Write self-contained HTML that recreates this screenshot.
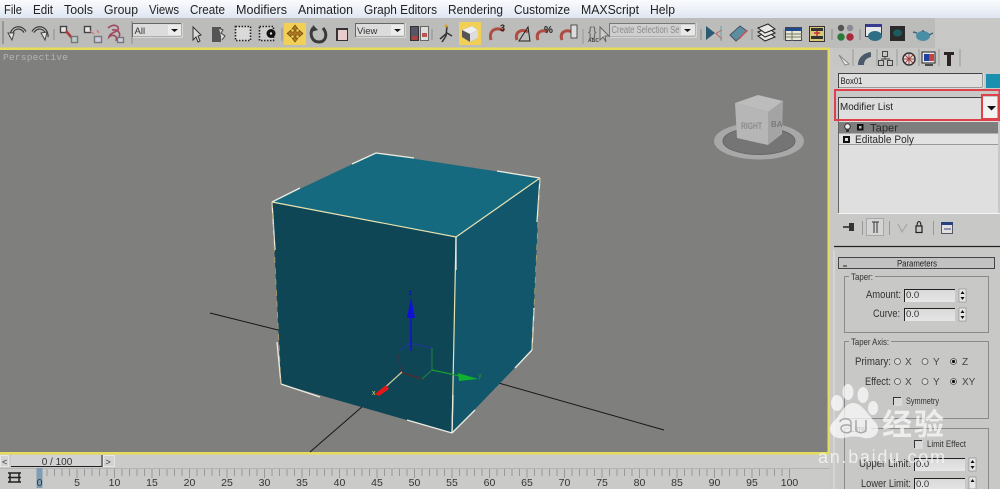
<!DOCTYPE html>
<html><head><meta charset="utf-8"><style>
html,body{margin:0;padding:0;background:#c8c8c6;width:1000px;height:489px;overflow:hidden}
svg{display:block;font-family:"Liberation Sans",sans-serif;filter:blur(.35px)}
</style></head><body>
<svg width="1000" height="489" viewBox="0 0 1000 489" xmlns="http://www.w3.org/2000/svg">
<defs>
<linearGradient id="mb" x1="0" y1="0" x2="0" y2="1"><stop offset="0" stop-color="#fafbfd"/><stop offset="1" stop-color="#dfe6f2"/></linearGradient>
<linearGradient id="fld" x1="0" y1="0" x2="0" y2="1"><stop offset="0" stop-color="#d8d8d8"/><stop offset="1" stop-color="#e6e6e6"/></linearGradient>
</defs>
<rect width="1000" height="489" fill="#c8c8c6"/>
<!-- menu -->
<rect width="1000" height="18" fill="url(#mb)"/>
<g font-size="13" fill="#222">
<text x="4" y="14" textLength="18" lengthAdjust="spacingAndGlyphs">File</text><text x="33" y="14" textLength="20" lengthAdjust="spacingAndGlyphs">Edit</text><text x="64" y="14" textLength="29" lengthAdjust="spacingAndGlyphs">Tools</text><text x="104" y="14" textLength="34" lengthAdjust="spacingAndGlyphs">Group</text><text x="149" y="14" textLength="30" lengthAdjust="spacingAndGlyphs">Views</text><text x="190" y="14" textLength="35" lengthAdjust="spacingAndGlyphs">Create</text><text x="236" y="14" textLength="51" lengthAdjust="spacingAndGlyphs">Modifiers</text><text x="298" y="14" textLength="55" lengthAdjust="spacingAndGlyphs">Animation</text><text x="364" y="14" textLength="73" lengthAdjust="spacingAndGlyphs">Graph Editors</text><text x="448" y="14" textLength="55" lengthAdjust="spacingAndGlyphs">Rendering</text><text x="514" y="14" textLength="56" lengthAdjust="spacingAndGlyphs">Customize</text><text x="581" y="14" textLength="58" lengthAdjust="spacingAndGlyphs">MAXScript</text><text x="650" y="14" textLength="25" lengthAdjust="spacingAndGlyphs">Help</text>
</g>
<!-- toolbar -->
<rect x="0" y="18" width="935" height="30" fill="#bcbcba"/>
<rect x="935" y="18" width="65" height="31" fill="#c8c8c6"/>
<path d="M3 21V44" stroke="#8a8a8a" stroke-width="1.500"/>
<!-- undo redo -->
<g fill="none" stroke="#3c3c3c" stroke-width="3.500"><path d="M11 37C11 27 21 25 25 32"/><path d="M33 32C37 25 47 27 47 37"/></g>
<g fill="none" stroke="#c8c8c8" stroke-width="1"><path d="M11 37C11 27 21 25 25 32"/><path d="M33 32C37 25 47 27 47 37"/></g>
<g fill="#e8e8e8" stroke="#444" stroke-width="1"><path d="M8 33L14 33L12 40Z"/><path d="M41 33L47 32L45 40Z"/></g>
<path d="M54 29V40M132 21V44M282 28V41M432 29V40" stroke="#8c8c8c"/>
<!-- link icons -->
<g fill="none" stroke-width="1.400">
<rect x="60.500" y="26.500" width="6" height="6" fill="#e8e8e8" stroke="#444"/><path d="M66 31L72 38" stroke="#b03a3a" stroke-width="2.500"/><rect x="71.500" y="36.500" width="6" height="6" fill="#bcc" stroke="#777"/>
<rect x="84.500" y="26.500" width="6" height="6" fill="#e8e8e8" stroke="#444"/><path d="M90 31L94 34M97 30L99 33" stroke="#c77"/><rect x="94.500" y="36.500" width="7" height="6" fill="#ccd" stroke="#777"/>
<path d="M108 28C114 23 120 26 118 30C114 33 110 33 109 37C112 34 118 35 116 41M112 30C118 29 121 33 119 37" stroke="#a04860" stroke-width="1.600"/><rect x="117.500" y="37.500" width="6" height="5" fill="#ccd" stroke="#777"/>
</g>
<!-- All dropdown -->
<rect x="132.500" y="23.500" width="49" height="13" fill="#dcdcdc" stroke="#666"/><path d="M133 37H182V23" fill="none" stroke="#f2f2f2"/>
<rect x="168" y="25" width="13" height="10" fill="#ececec"/><path d="M171 29H178L174.500 32Z" fill="#111"/>
<text x="134.500" y="34" font-size="9.500" fill="#333">All</text>
<!-- select icons -->
<path d="M193 27L193 40L196 37L198 42L200 41L198 36L201 35Z" fill="#dcdcdc" stroke="#333"/>
<rect x="212" y="27" width="9" height="15" fill="#555"/><path d="M219 28L223 30L221 33L225 36L222 40" fill="#ddd" stroke="#444"/>
<rect x="235.500" y="26.500" width="15" height="14" fill="#dadada" stroke="#222" stroke-width="1.600" stroke-dasharray="1.500 1.500"/>
<rect x="259.500" y="26.500" width="14" height="14" fill="#cfcfcf" stroke="#222" stroke-width="1.600" stroke-dasharray="1.500 1.500"/><circle cx="271" cy="33.500" r="4.500" fill="#111"/><circle cx="271" cy="33.500" r="1.200" fill="#ddd"/>
<!-- move active -->
<rect x="284" y="23" width="22" height="22" fill="#f2cf55"/>
<path d="M295 25L298 29H296V32H299V30L303 33.500L299 37V35H296V38H298L295 42L292 38H294V35H291V37L287 33.500L291 30V32H294V29H292Z" fill="#b07820" stroke="#5a4010" stroke-width=".6"/>
<!-- rotate scale -->
<path d="M313 28C309 34 312 42 319 42C326 42 328 34 323 28" fill="none" stroke="#3a3a3a" stroke-width="3"/><path d="M313 25L318 30L311 32Z" fill="#3a3a3a"/>
<rect x="336" y="28" width="12" height="13" fill="#333"/><rect x="338" y="30" width="9" height="10" fill="#e9cccc"/>
<!-- View dropdown -->
<rect x="355.500" y="23.500" width="49" height="13" fill="#dcdcdc" stroke="#666"/><path d="M356 37H405V23" fill="none" stroke="#f2f2f2"/>
<rect x="391" y="25" width="13" height="10" fill="#ececec"/><path d="M394 29H401L397.500 32Z" fill="#111"/>
<text x="357" y="34" font-size="9.500" fill="#333">View</text>
<rect x="410.500" y="26.500" width="8" height="14" fill="#556" stroke="#333"/><rect x="412" y="36" width="5" height="4" fill="#a44"/><rect x="420.500" y="26.500" width="8" height="14" fill="#ddd" stroke="#666"/><rect x="422" y="33" width="5" height="4" fill="#b55"/>
<path d="M447 26L446 36M440 39L447 33L452 36M446 36L442 42" stroke="#333" stroke-width="1.500" fill="none"/><circle cx="446" cy="26" r="1.500" fill="#dca020"/>
<!-- snap active -->
<rect x="459" y="22" width="22" height="23" fill="#f2cf55"/>
<path d="M462 30L472 26L478 30V38L470 42L462 37Z" fill="#555"/><path d="M462 30L472 26L478 30L470 34Z" fill="#eee"/><path d="M470 34V42L478 38V30Z" fill="#ddd"/>
<!-- magnets -->
<g fill="none" stroke="#b04d42" stroke-width="3">
<path d="M491 40C488 30 497 26 504 31"/><path d="M517 40C514 32 522 28 528 32"/><path d="M538 40C535 32 542 29 548 32"/><path d="M562 40C559 32 566 29 572 32"/></g>
<text x="500" y="31" font-size="9" font-weight="bold" fill="#222">3</text>
<path d="M519 41L528 27L530 41Z" fill="none" stroke="#222"/>
<text x="544" y="33" font-size="10" font-weight="bold" fill="#222">%</text>
<rect x="571" y="25" width="6" height="13" fill="#ddd" stroke="#333" stroke-width=".8"/>
<path d="M583 29V44" stroke="#999"/>
<text x="588" y="36" font-size="13" fill="#666">{}</text><path d="M600 27V40L603 37L606 42L605 36L609 36Z" fill="#ccc" stroke="#666"/>
<text x="588" y="42" font-size="5" font-weight="bold" fill="#444">ABC</text>
<!-- selection set -->
<rect x="609.500" y="23.500" width="86" height="13" fill="#cfcfcf" stroke="#777"/><path d="M610 37H696V23" fill="none" stroke="#ededed"/>
<rect x="681" y="25" width="14" height="10" fill="#e8e8e8"/><path d="M684 29H691L687.500 32Z" fill="#111"/>
<text x="611.500" y="33" font-size="10" fill="#8a8a8a" textLength="68" lengthAdjust="spacingAndGlyphs">Create Selection Se</text>
<path d="M701 29V40M752 29V40M784 29V40M832 29V40M860 29V40" stroke="#8c8c8c"/>
<path d="M706 26L715 33L706 40Z" fill="#2c5a72"/><path d="M721 26V41" stroke="#8aa" stroke-width="1.500"/><path d="M722 30L716 33.500L722 39" fill="none" stroke="#b77" stroke-width="1.300"/>
<path d="M730 35L740 26L747 31L736 41Z" fill="#5b8ea0" stroke="#456"/><path d="M739 39L747 30" stroke="#c55" stroke-width="1.500"/>
<g fill="#e8e8e8" stroke="#222"><path d="M758 36L768 32L775 37L765 41Z"/><path d="M758 32L768 28L775 33L765 37Z"/><path d="M758 28L768 24L775 29L765 33Z"/></g>
<rect x="785.500" y="27.500" width="16" height="13" fill="#e8e8d8" stroke="#445"/><rect x="786" y="28" width="16" height="3" fill="#1f4a90"/><path d="M786 34H802M786 37H802M792 31V41" stroke="#776"/>
<rect x="809.500" y="26.500" width="15" height="15" fill="#d9c87a" stroke="#333"/><rect x="811" y="28" width="12" height="3" fill="#333"/><rect x="811" y="36" width="12" height="3" fill="#333"/><path d="M817 31V36M814 33H820" stroke="#c33" stroke-width="1.500"/>
<g><circle cx="841" cy="28" r="3.200" fill="#555"/><circle cx="850" cy="28" r="3.200" fill="#8a8a95"/><circle cx="841" cy="37" r="3.700" fill="#2a7a3a"/><circle cx="850" cy="37" r="3.700" fill="#a82a3a"/></g>
<rect x="865.500" y="24.500" width="16" height="12" fill="#e8e8e8" stroke="#334"/><rect x="866" y="24" width="16" height="3" fill="#3a3a90"/><ellipse cx="875" cy="36" rx="7" ry="5" fill="#2e6f86"/>
<rect x="890" y="26" width="15" height="15" fill="#2a2a2a"/><ellipse cx="897.500" cy="33" rx="4.500" ry="3.500" fill="#1d5c5c"/>
<ellipse cx="923" cy="36" rx="7" ry="5" fill="#4a8ea6"/><path d="M917 33L913 32M929 35L933 33" stroke="#467" stroke-width="1.500"/><circle cx="923" cy="31" r="1" fill="#467"/>
<!-- viewport -->
<rect x="0" y="47.500" width="830" height="2.500" fill="#e6dc5c"/>
<rect x="0" y="50" width="828" height="402" fill="#7f7f7e"/>
<rect x="827.500" y="48" width="2.500" height="406" fill="#e6dc5c"/>
<rect x="0" y="452" width="830" height="2.500" fill="#e6dc5c"/>
<text x="3" y="60" font-size="9.500" fill="#b4b4b4" font-family="Liberation Mono,monospace" textLength="65">Perspective</text>
<!-- grid lines -->
<g stroke="#161616" stroke-width="1" fill="none"><path d="M210 313L282 331"/><path d="M495 382L664 430"/><path d="M310 452L363 406"/></g>
<!-- cube -->
<path d="M272 202L376 153L540 178L456 237Z" fill="#166a80"/>
<path d="M272 202L456 237L452 433L281 384Z" fill="#0e4656"/>
<path d="M456 237L540 178L532 350L452 433Z" fill="#11566a"/>
<g fill="none" stroke="#e8e2b0" stroke-width="1.200"><path d="M272 202L456 237L540 178"/><path d="M456 237L452 433"/></g>
<g fill="none" stroke="#ecebe0" stroke-width="1.300">
<path d="M272 202L275 250M272 202L300 188M376 153L352 164M376 153L414 158M540 178L497 171M540 178L537 222M456 237L456 270M281 384L277 342M281 384L320 397M452 433L407 420M452 433L475 410M452 433L453 395M532 350L534 308M532 350L515 368"/>
</g>
<path d="M272 202L281 384M540 178L532 350" stroke="#b8a870" stroke-width=".7" fill="none" stroke-dasharray="6 5"/>
<!-- gizmo -->
<g fill="none" stroke-width="1.200">
<path d="M400 355L399 355L400 372L422 379" stroke="#5a2a30"/>
<path d="M410 343L399 351" stroke="#1a3a90"/><path d="M410 343L432 348" stroke="#1a3a90"/>
<path d="M432 348V370L422 379" stroke="#1d7a44"/>
<path d="M411 351V305" stroke="#1414c8" stroke-width="1.600"/>
<path d="M432 370L460 376" stroke="#16a030" stroke-width="1.400"/>
<path d="M402 372L380 392" stroke="#d0d0a0"/>
</g>
<path d="M411 298L415 318H407Z" fill="#1010d8"/>
<text x="408.500" y="295" font-size="7" font-weight="bold" fill="#1010c0">z</text>
<path d="M458 373L478 379L459 381Z" fill="#10b030"/>
<text x="478" y="378" font-size="7" fill="#20a040">y</text>
<path d="M375 394L386 385L389 389L379 396Z" fill="#e01818"/>
<text x="372" y="395" font-size="7" fill="#e8d860">x</text>
<!-- viewcube -->
<ellipse cx="759" cy="141" rx="45" ry="18.500" fill="#a8a8a8"/>
<ellipse cx="759" cy="141" rx="36" ry="13.500" fill="#757575" stroke="#666"/>
<path d="M735 103L758 95L783 101L768 112Z" fill="#bcbcbc"/>
<path d="M735 103L768 112L768 145L737 138Z" fill="#b6b6b6"/>
<path d="M768 112L783 101L782 134L768 145Z" fill="#a4a4a4"/>
<text x="741" y="129" font-size="9" font-weight="bold" fill="#8b8b8b" textLength="21" lengthAdjust="spacingAndGlyphs">RIGHT</text>
<text x="771" y="127" font-size="8" font-weight="bold" fill="#7a7a7a">BA</text>
<!-- right panel -->
<rect x="830" y="49" width="170" height="440" fill="#c8c8c6"/>
<rect x="833" y="48" width="127" height="19" fill="#c6c6c4"/>
<path d="M853 49V66M877 49V66M897 49V66M919 49V66M939 49V66M960 49V66" stroke="#9a9a9a"/>
<path d="M839 55L849 64L845 65Z" fill="#eee" stroke="#888"/>
<path d="M858 65C858 58 863 53 871 52L871 57C866 58 864 61 864 65Z" fill="#4a5a6a"/>
<g fill="none" stroke="#444"><rect x="882.500" y="51.500" width="5" height="5"/><rect x="878.500" y="60.500" width="5" height="5"/><rect x="887.500" y="60.500" width="5" height="5"/><path d="M885 57V59H881M885 59H890"/></g>
<circle cx="909" cy="59" r="6" fill="#e6e0e0" stroke="#333" stroke-width="1.500"/><path d="M904 59H914M909 54V64M905 55L913 63M913 55L905 63" stroke="#a04040"/>
<rect x="922" y="52" width="13" height="11" fill="#e8e8ee" stroke="#222"/><rect x="924" y="54" width="5" height="7" fill="#2040a0"/><path d="M929 54H934V61H929Z" fill="#c84040"/><path d="M925 65H933" stroke="#222" stroke-width="1.500"/>
<path d="M944 52H954V55H951V66H947V55H944Z" fill="#2a2522"/>
<!-- name field -->
<rect x="838.500" y="73.500" width="144" height="14" fill="#dedede" stroke="#444"/><path d="M839 88H983V73" fill="none" stroke="#efefef"/>
<text x="840.500" y="84" font-size="9.500" fill="#222" textLength="22" lengthAdjust="spacingAndGlyphs">Box01</text>
<rect x="986" y="74" width="14" height="14" fill="#1a8fae"/>
<!-- modifier list -->
<rect x="838" y="97" width="144" height="22" fill="#dedede"/><path d="M838.500 119V97.500H982" fill="none" stroke="#444"/>
<text x="840" y="110" font-size="10.500" fill="#222" textLength="53" lengthAdjust="spacingAndGlyphs">Modifier List</text>
<rect x="983" y="97" width="15" height="21" fill="#f2f2f2"/><path d="M987 106H996L991.500 110.500Z" fill="#111"/>
<rect x="835" y="90" width="164.500" height="30" fill="none" stroke="#e0404a" stroke-width="2"/>
<rect x="982" y="95" width="16.500" height="24" fill="none" stroke="#e0404a" stroke-width="2"/>
<!-- stack -->
<rect x="838" y="121" width="160" height="92" fill="#dfdfdf"/>
<path d="M838.500 121V213" stroke="#666"/><path d="M838 213.500H1000" stroke="#f4f4f4"/>
<rect x="839" y="122" width="159" height="11.500" fill="#7e7e7e"/>
<rect x="839" y="134" width="159" height="10.500" fill="#e2e2e2"/>
<path d="M839 144.500H998" stroke="#999"/>
<circle cx="847.500" cy="126.500" r="2.800" fill="#eee" stroke="#333"/><rect x="846" y="129" width="3" height="3" fill="#333"/>
<rect x="857" y="124" width="6.500" height="6.500" fill="#111"/><rect x="859" y="126" width="2.500" height="2.500" fill="#bbb"/>
<text x="870" y="131.500" font-size="11" fill="#2a2a2a" textLength="28" lengthAdjust="spacingAndGlyphs">Taper</text>
<rect x="843" y="136" width="7" height="7" fill="#111"/><rect x="845" y="138" width="3" height="3" fill="#ddd"/>
<text x="855" y="143" font-size="11" fill="#2a2a2a" textLength="59" lengthAdjust="spacingAndGlyphs">Editable Poly</text>
<!-- stack buttons -->
<g fill="none">
<path d="M843 227H849" stroke="#222" stroke-width="1.500"/><rect x="849" y="223" width="5" height="8" fill="#333"/>
<path d="M862.500 221V235M889.500 221V235M933.500 221V235" stroke="#999"/>
<rect x="866.500" y="218.500" width="17" height="17" stroke="#a8a8a8" fill="#d4d4d4"/>
<path d="M874 222V233M877 222V233" stroke="#333"/><path d="M872 222H876M875 222H879" stroke="#333"/>
<path d="M898 224L902 232L907 224" stroke="#a0a0a0"/>
<rect x="916" y="226" width="6" height="6.500" stroke="#222" stroke-width="1.200"/><path d="M917 226C917 220 921 220 921 226" stroke="#222"/>
<rect x="941.500" y="222.500" width="11" height="11" stroke="#556" fill="#e0e0e0"/><rect x="941" y="222" width="12" height="3" fill="#2a3f80"/><path d="M944 229H951" stroke="#447"/>
</g>
<path d="M834 246.500H1000" stroke="#222" stroke-width="1.200"/>
<path d="M834 250V489" stroke="#e2e2e2" stroke-width="1"/>
<!-- rollout -->
<rect x="838.500" y="257.500" width="156" height="11" fill="#c2c2c2" stroke="#444"/>
<path d="M843 266H847" stroke="#222"/>
<text x="897" y="266.500" font-size="9" fill="#222" textLength="40" lengthAdjust="spacingAndGlyphs">Parameters</text>
<g fill="none" stroke="#8a8a8a">
<rect x="844.500" y="276.500" width="144" height="56"/>
<rect x="844.500" y="341.500" width="144" height="77"/>
<path d="M844.500 489V428.500H988.500V489"/>
</g>
<rect x="849" y="272" width="26" height="9" fill="#c8c8c6"/><rect x="849" y="337" width="42" height="9" fill="#c8c8c6"/><rect x="849" y="424" width="22" height="9" fill="#c8c8c6"/>
<g font-size="9.500" fill="#333">
<text x="851" y="280" textLength="22" lengthAdjust="spacingAndGlyphs">Taper:</text>
<text x="851" y="345" textLength="38" lengthAdjust="spacingAndGlyphs">Taper Axis:</text>
<text x="850" y="432" textLength="17" lengthAdjust="spacingAndGlyphs">Limit</text>
</g>
<g font-size="11" fill="#333">
<text x="866" y="298" textLength="35" lengthAdjust="spacingAndGlyphs">Amount:</text>
<text x="873" y="317" textLength="27" lengthAdjust="spacingAndGlyphs">Curve:</text>
<text x="855" y="365" textLength="36" lengthAdjust="spacingAndGlyphs">Primary:</text>
<text x="865" y="385" textLength="26" lengthAdjust="spacingAndGlyphs">Effect:</text>
<text x="859" y="467" textLength="52" lengthAdjust="spacingAndGlyphs">Upper Limit:</text>
<text x="861" y="487" textLength="50" lengthAdjust="spacingAndGlyphs">Lower Limit:</text>
</g>
<!-- spinners -->
<g>
<rect x="904" y="289" width="51" height="13" fill="url(#fld)"/><path d="M904.500 302V289.500H955" fill="none" stroke="#222"/>
<rect x="904" y="308" width="51" height="13" fill="url(#fld)"/><path d="M904.500 321V308.500H955" fill="none" stroke="#222"/>
<rect x="914" y="458" width="51" height="13" fill="url(#fld)"/><path d="M914.500 471V458.500H965" fill="none" stroke="#222"/>
<rect x="914" y="478" width="51" height="13" fill="url(#fld)"/><path d="M914.500 491V478.500H965" fill="none" stroke="#222"/>
</g>
<g font-size="9.500" fill="#333">
<text x="906" y="298">0.0</text><text x="906" y="317">0.0</text><text x="916" y="467">0.0</text><text x="916" y="487">0.0</text>
</g>
<g fill="#e6e6e6" stroke="#888" stroke-width=".6">
<rect x="959" y="289" width="7" height="13"/><rect x="959" y="308" width="7" height="13"/><rect x="969" y="458" width="7" height="13"/><rect x="969" y="477" width="7" height="12"/>
</g>
<g fill="#111">
<path d="M960.500 294H964.500L962.500 291ZM960.500 297H964.500L962.500 300ZM960.500 313H964.500L962.500 310ZM960.500 316H964.500L962.500 319ZM970.500 463H974.500L972.500 460ZM970.500 466H974.500L972.500 469ZM970.500 482H974.500L972.500 479Z"/>
</g>
<!-- radios -->
<g fill="#d8d8d8" stroke="#555" stroke-width=".8">
<circle cx="897.500" cy="361.500" r="3"/><circle cx="925" cy="361.500" r="3"/><circle cx="953.500" cy="361.500" r="3"/>
<circle cx="897.500" cy="381.500" r="3"/><circle cx="925" cy="381.500" r="3"/><circle cx="953.500" cy="381.500" r="3"/>
</g>
<circle cx="953.500" cy="361.500" r="1.600" fill="#111"/><circle cx="953.500" cy="381.500" r="1.600" fill="#111"/>
<g font-size="10" fill="#444">
<text x="905" y="365">X</text><text x="933" y="365">Y</text><text x="962" y="365">Z</text>
<text x="905" y="385">X</text><text x="933" y="385">Y</text><text x="962" y="385">XY</text>
</g>
<path d="M893.500 405V397.500H901" fill="none" stroke="#333"/><rect x="894" y="398" width="8" height="8" fill="#d8d8d8"/>
<text x="906" y="404" font-size="9" fill="#333" textLength="33" lengthAdjust="spacingAndGlyphs">Symmetry</text>
<path d="M914.500 448V440.500H922" fill="none" stroke="#333"/><rect x="915" y="441" width="8" height="8" fill="#d8d8d8"/>
<text x="927" y="447" font-size="9" fill="#333" textLength="39" lengthAdjust="spacingAndGlyphs">Limit Effect</text>
<!-- time slider -->
<rect x="0" y="454.500" width="830" height="13.500" fill="#cbcbc9"/>
<rect x="0.500" y="455.500" width="8" height="11" fill="#d2d2d2" stroke="#e6e6e6"/>
<text x="2" y="465" font-size="9" fill="#333">&lt;</text>
<rect x="11" y="455" width="91" height="11.500" fill="#d2d2d2"/><path d="M11 466.500H102V455" fill="none" stroke="#222"/>
<text x="57" y="465" font-size="10" fill="#333" text-anchor="middle">0 / 100</text>
<rect x="103.500" y="455.500" width="11" height="11" fill="#d2d2d2" stroke="#e6e6e6"/>
<text x="105.500" y="465" font-size="9" fill="#333">&gt;</text>
<!-- track bar -->
<rect x="0" y="468" width="830" height="21" fill="#cacac8"/>
<path d="M0 468.500H830" stroke="#b4b4b4"/>
<path d="M8 473H21M8 482H21M10 473V482M19 473V482M8 477.500H21" stroke="#222" stroke-width="1.500"/>
<rect x="36.500" y="468" width="6" height="20" fill="#7f9db5"/>
<path stroke="#999" fill="none" d="M47 469v7M54.500 469v7M62 469v7M69.500 469v7M77 469v9M84.500 469v7M92 469v7M99.500 469v7M107 469v7M114.500 469v9M122 469v7M129.500 469v7M137 469v7M144.500 469v7M152 469v9M159.500 469v7M167 469v7M174.500 469v7M182 469v7M189.500 469v9M197 469v7M204.500 469v7M212 469v7M219.500 469v7M227 469v9M234.500 469v7M242 469v7M249.500 469v7M257 469v7M264.500 469v9M272 469v7M279.500 469v7M287 469v7M294.500 469v7M302 469v9M309.500 469v7M317 469v7M324.500 469v7M332 469v7M339.500 469v9M347 469v7M354.500 469v7M362 469v7M369.500 469v7M377 469v9M384.500 469v7M392 469v7M399.500 469v7M407 469v7M414.500 469v9M422 469v7M429.500 469v7M437 469v7M444.500 469v7M452 469v9M459.500 469v7M467 469v7M474.500 469v7M482 469v7M489.500 469v9M497 469v7M504.500 469v7M512 469v7M519.500 469v7M527 469v9M534.500 469v7M542 469v7M549.500 469v7M557 469v7M564.500 469v9M572 469v7M579.500 469v7M587 469v7M594.500 469v7M602 469v9M609.500 469v7M617 469v7M624.500 469v7M632 469v7M639.500 469v9M647 469v7M654.500 469v7M662 469v7M669.500 469v7M677 469v9M684.500 469v7M692 469v7M699.500 469v7M707 469v7M714.500 469v9M722 469v7M729.500 469v7M737 469v7M744.500 469v7M752 469v9M759.500 469v7M767 469v7M774.500 469v7M782 469v7M789.500 469v9"/>
<g font-size="10.500" fill="#333" text-anchor="middle">
<text x="39.500" y="486">0</text><text x="77" y="486">5</text><text x="114.500" y="486">10</text><text x="152" y="486">15</text><text x="189.500" y="486">20</text><text x="227" y="486">25</text><text x="264.500" y="486">30</text><text x="302" y="486">35</text><text x="339.500" y="486">40</text><text x="377" y="486">45</text><text x="414.500" y="486">50</text><text x="452" y="486">55</text><text x="489.500" y="486">60</text><text x="527" y="486">65</text><text x="564.500" y="486">70</text><text x="602" y="486">75</text><text x="639.500" y="486">80</text><text x="677" y="486">85</text><text x="714.500" y="486">90</text><text x="752" y="486">95</text><text x="789.500" y="486">100</text>
</g>
<!-- watermark -->
<g fill="#fff" opacity=".7">
<ellipse cx="837" cy="403" rx="6" ry="8"/><ellipse cx="848" cy="392" rx="5.500" ry="8"/><ellipse cx="863" cy="395" rx="5.500" ry="8"/><ellipse cx="873" cy="408" rx="5" ry="7"/>
<path d="M853 403C862 403 868 415 876 423C882 432 874 440 864 438C858 436 850 436 844 438C834 440 826 432 832 423C840 417 844 403 853 403Z"/>
</g>
<g fill="none" stroke="#a8a8a8" stroke-width="1.500"><path d="M840 422C840 418 851 417 851 423V430C851 434 841 434 841 428C841 425 847 424 851 426"/><path d="M856 420V429C856 434 866 434 866 429V420"/></g>
<text x="882" y="435" font-size="30" fill="#fff" opacity=".7" font-family="Noto Sans CJK SC,sans-serif" font-weight="bold" textLength="62">经验</text>
<text x="818" y="463" font-size="18" fill="#fff" opacity=".7" textLength="127">an.baidu.com</text>
</svg>
</body></html>
